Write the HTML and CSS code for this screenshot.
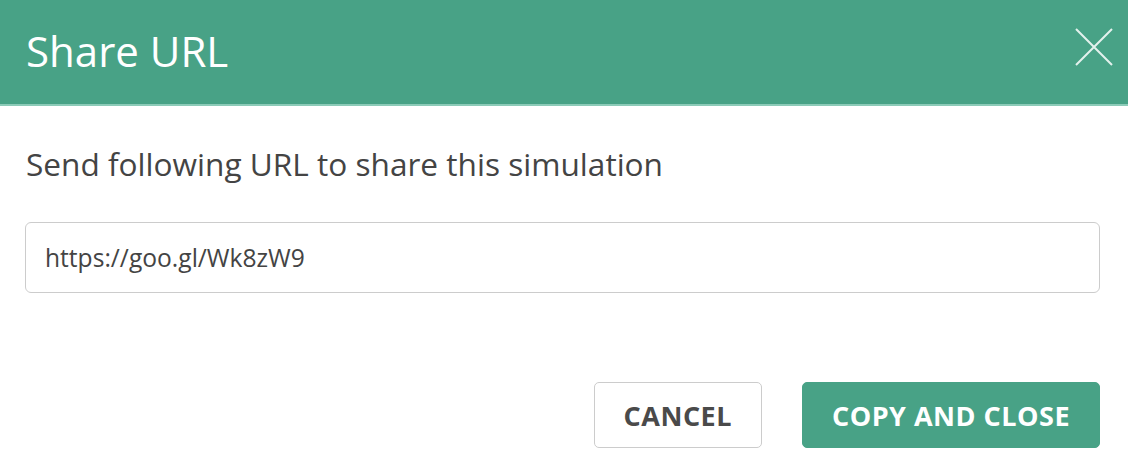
FILE: index.html
```html
<!DOCTYPE html>
<html lang="en">
<head>
    <meta charset="UTF-8">
    <meta name="viewport" content="width=device-width, initial-scale=1.0">
    <title>Share URL</title>
    <link rel="stylesheet" href="styles.css">
</head>
<body>
    <div class="modal">
        <header class="modal-header">
            <h1>Share URL</h1>
            <button class="close-button" aria-label="Close">
                <svg width="38" height="38" viewBox="0 0 38 38">
                    <path d="M1 1 L37 37 M37 1 L1 37" stroke="#ffffff" stroke-opacity="0.85" stroke-width="2" fill="none"/>
                </svg>
            </button>
        </header>
        <div class="modal-body">
            <p class="message">Send following URL to share this simulation</p>
            <input type="text" class="url-input" value="https://goo.gl/Wk8zW9" readonly>
        </div>
        <div class="modal-footer">
            <button class="btn btn-cancel">Cancel</button>
            <button class="btn btn-primary">Copy and close</button>
        </div>
    </div>
</body>
</html>
```
FILE: styles.css
```css
/* Reset */
body {
  margin: 0;
  font-family: "Open Sans", "Liberation Sans", sans-serif;
  background-color: #ffffff;
  color: #444444;
}

.modal {
  width: 1128px;
  height: 474px;
  display: flex;
  flex-direction: column;
}

.modal-header {
  background-color: #48a286;
  height: 106px;
  border-bottom: 2px solid #8ccbb8;
  box-sizing: border-box;
  display: flex;
  align-items: center;
  justify-content: space-between;
  padding: 0 15px 0 26px;
}

.modal-header h1 {
  margin: 0;
  font-size: 42px;
  font-weight: 400;
  color: #ffffff;
  padding-bottom: 4px;
}

.close-button {
  background: none;
  border: none;
  padding: 0;
  width: 38px;
  height: 38px;
  cursor: pointer;
  margin-bottom: 10px;
}

.close-button svg {
  display: block;
}

.modal-body {
  padding: 0 28px 0 25px;
}

.message {
  margin: 38px 0 0 1px;
  font-size: 31.6px;
  line-height: 40px;
  color: #444444;
}

.url-input {
  display: block;
  width: 100%;
  box-sizing: border-box;
  margin-top: 38px;
  height: 71px;
  padding: 0 19px;
  border: 1px solid #cccccc;
  border-radius: 6px;
  font-family: "Open Sans", "Liberation Sans", sans-serif;
  font-size: 24.6px;
  color: #444444;
  outline: none;
}

.modal-footer {
  display: flex;
  justify-content: flex-end;
  gap: 40px;
  padding: 89px 28px 0 0;
}

.btn {
  height: 66px;
  padding: 0 29px;
  border-radius: 5px;
  font-family: "Open Sans", "Liberation Sans", sans-serif;
  font-size: 27px;
  font-weight: 700;
  letter-spacing: 0.5px;
  text-transform: uppercase;
  cursor: pointer;
}

.btn-cancel {
  background-color: #ffffff;
  color: #4a4a4a;
  border: 1px solid #cccccc;
}

.btn-primary {
  background-color: #48a286;
  color: #ffffff;
  border: 1px solid #48a286;
}
```
